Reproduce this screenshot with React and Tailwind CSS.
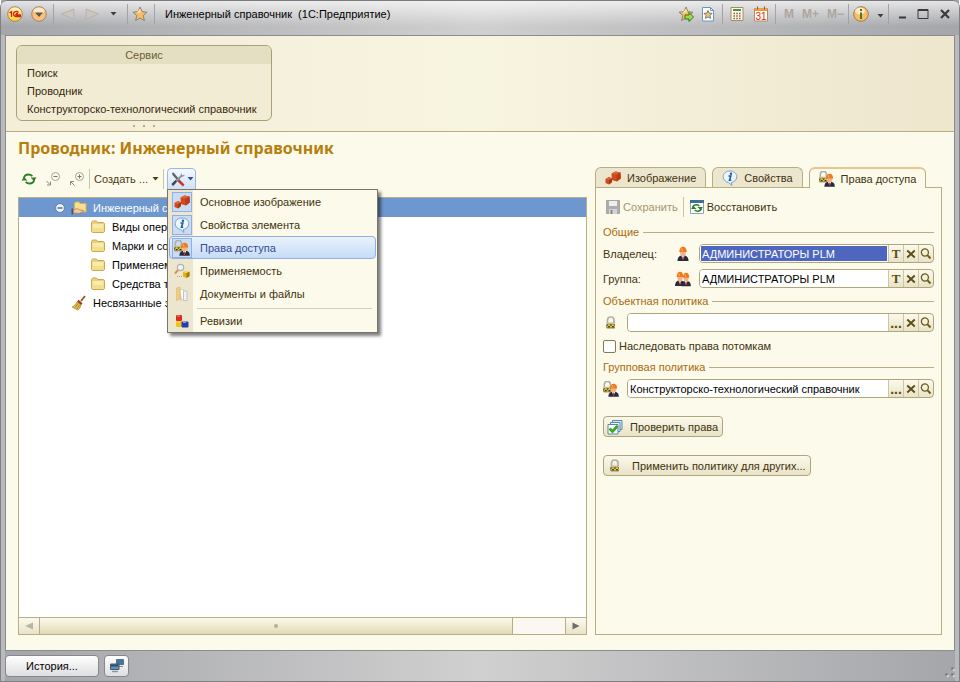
import { useState } from 'react'
import clsx from 'clsx'

function Icon({ size = 16, children, className }) {
  return (
    <svg
      width={size}
      height={size}
      viewBox="0 0 16 16"
      fill="none"
      aria-hidden="true"
      className={clsx('shrink-0', className)}
    >
      {children}
    </svg>
  )
}

function CubesIcon() {
  return (
    <Icon>
      <path d="M6.5 3.500l4-2 5 1 .3 6-4 3-5-1.500z" fill="#cf4a1f" />
      <path d="M6.500 3.500l4-2 5 1-4 2z" fill="#de6536" />
      <path d="M11.500 4.500l4-2 .3 6-4 3z" fill="#b83c14" />
      <path d="M.5 9L4 7l3 1.500V12l-3 2.500-3.500-1.500z" fill="#cf4a1f" />
      <path d="M.5 9L4 7l3 1.500-3 1.500z" fill="#de6536" />
      <path d="M4 10l3-1.500V12l-3 2.500z" fill="#a83510" />
    </Icon>
  )
}

function InfoBubbleIcon() {
  return (
    <Icon>
      <path
        d="M8 1c3.900 0 6.800 2.500 6.800 5.700S12.300 12 9.300 12.500L10 15.500 6.500 12.500C3.500 12 1.200 9.700 1.200 6.700 1.200 3.500 4.100 1 8 1z"
        fill="#eef6fd"
        stroke="#7ca0c4"
      />
      <circle cx="9" cy="3.700" r="1.200" fill="#1d5cab" />
      <path d="M6.500 6h2.300L7.500 10.200h1.700" stroke="#1d5cab" strokeWidth="1.600" />
    </Icon>
  )
}

function PadlockShape() {
  return (
    <>
      <path d="M4.500 8V5.200C4.500 3 5.800 2 7.800 2S11 3 11 5.200V8" stroke="#b0b0aa" strokeWidth="1.700" />
      <rect x="3.500" y="7.500" width="8.500" height="6.500" rx="1" fill="#c4bc92" />
      <path d="M3.500 9.500h8.500v3H3.500z" fill="#26241c" />
      <path d="M4 12l2-2.300 2 2.300 2-2.300 2 2.300" stroke="#e8c52e" strokeWidth="1.200" />
    </>
  )
}

function PadlockIcon() {
  return (
    <Icon>
      <PadlockShape />
    </Icon>
  )
}

function WorkerShape() {
  return (
    <>
      <path d="M2.500 15c0-3.500 1.500-5.500 5.500-5.500s5.500 2 5.500 5.500z" fill="#272c3d" />
      <path d="M6.200 9.500L8 13.500l1.800-4z" fill="#fff" />
      <path d="M7.600 10.300h.9l.4 2.700-.9 1-.8-1z" fill="#c8352b" />
      <ellipse cx="8" cy="6.500" rx="2.900" ry="3.500" fill="#f0b48a" />
      <path d="M4.300 6C4.300 2.800 5.700.8 8 .8s3.700 2 3.700 5.200z" fill="#ee7a1c" />
      <path d="M6.500 2.500L7.500 5" stroke="#ffb870" />
    </>
  )
}

function WorkerIcon() {
  return (
    <Icon>
      <WorkerShape />
    </Icon>
  )
}

function WorkersIcon() {
  return (
    <Icon>
      <g transform="translate(-2.200 0) scale(.9 1)">
        <WorkerShape />
      </g>
      <g transform="translate(4.200 1) scale(.86 .95)">
        <WorkerShape />
      </g>
    </Icon>
  )
}

function RightsIcon() {
  return (
    <Icon>
      <g transform="translate(-3 -1.500) scale(.95)">
        <PadlockShape />
      </g>
      <g transform="translate(3 2) scale(.95 .92)">
        <WorkerShape />
      </g>
    </Icon>
  )
}

function SearchBoxIcon() {
  return (
    <Icon>
      <circle cx="6.500" cy="4.500" r="3.200" fill="#edf5fb" stroke="#b3b3ad" strokeWidth="1.200" />
      <path d="M4 7L1 10.500" stroke="#d8954e" strokeWidth="2" />
      <path d="M3 13.500h5" stroke="#b4a679" strokeDasharray="1 1" />
      <path d="M9 9l3-1.200 3.500 1v4.500l-3 1.700L9 13.500z" fill="#dfb31b" />
      <path d="M9 9l3-1.200 3.500 1-3 1.200z" fill="#f7df71" />
      <path d="M12.500 10l3-1.200v4.500l-3 1.700z" fill="#a67b0b" />
    </Icon>
  )
}

function FilesIcon() {
  return (
    <Icon>
      <path d="M2.500 2L6 1v12l-3.500 1.500z" fill="#f1cf82" stroke="#d9b468" strokeWidth=".6" />
      <path d="M6 3.500h3.500v10.500H6z" fill="#fff" stroke="#c6c6c6" strokeWidth=".7" />
      <path d="M9.500 5H13v9.500H9.500z" fill="#f2f2f2" stroke="#b5b5b5" strokeWidth=".7" />
      <path d="M5.500 2.500l1.500 11.500" stroke="#e6c37a" strokeWidth="1.500" />
    </Icon>
  )
}

function RevisionsIcon() {
  return (
    <Icon>
      <rect x="2" y="2" width="6" height="6" rx="1" fill="#dd2b24" />
      <rect x="2" y="8" width="6" height="6" rx="1" fill="#f0c417" />
      <rect x="7.500" y="8.500" width="7" height="6" rx="1" fill="#2340b0" />
      <path d="M3 3h3M3 9h3M9 9.500h3" stroke="#fff" strokeOpacity=".5" />
    </Icon>
  )
}

function FolderIcon() {
  return (
    <Icon>
      <path d="M1.500 3.500l1-1.500h4l1 1.500h6l1 1V12.500l-1 1h-11l-1-1z" fill="#ecd07b" stroke="#cda94c" />
      <path d="M2.500 5h11v7.500h-11z" fill="#f9eba9" />
      <path d="M2.500 9h11v3.500h-11z" fill="#f4de8d" />
    </Icon>
  )
}

function SharedFolderIcon() {
  return (
    <Icon>
      <path d="M3.500 3.500l1-1.500h3.500l1 1.500h6V12h-11.500z" fill="#f7df91" stroke="#d9b351" />
      <path d="M2.500 10.500c2-1.500 3.500-2.500 5-1.500l1 1 3.500.3c1 .3 1 1.300 0 1.500l-4 1.700-5.500-.5z" fill="#efc9a2" stroke="#a9744a" strokeWidth=".7" />
      <path d="M.500 8.500h1.500v6H.5z" fill="#47536d" />
    </Icon>
  )
}

function BroomIcon() {
  return (
    <Icon>
      <path d="M10 6L14 1" stroke="#8d5a20" strokeWidth="1.800" />
      <path d="M7.500 4.800l4 3.500-1.500 2-4-3.500z" fill="#9d3b20" />
      <path d="M6 6.800l4 3.500c-.5 2-1.500 4-3.500 4.700L1 12c2.500-1 4-3 5-5.200z" fill="#e3bd4c" stroke="#a67b21" strokeWidth=".6" />
      <path d="M7 8.500L4 12.500M8.500 10l-2.500 4" stroke="#a67b21" strokeWidth=".8" />
    </Icon>
  )
}

function RefreshIcon() {
  return (
    <Icon>
      <path d="M2.800 7.500C3.200 4.800 5.200 3.500 7.500 3.500c1.500 0 2.800.6 3.800 1.700M13.200 8.500c-.4 2.700-2.400 4-4.700 4-1.500 0-2.800-.6-3.800-1.700" stroke="#2c7e22" strokeWidth="1.800" />
      <path d="M9.500 6.500h6L13 10zM.500 9.500h6L3 6z" fill="#2c7e22" />
    </Icon>
  )
}

function CollapseIcon({ plus }) {
  return (
    <Icon>
      <circle cx="10.500" cy="5.500" r="4" stroke="#a6a496" />
      <path d="M8.500 5.500h4" stroke="#77756a" />
      {plus && <path d="M10.500 3.500v4" stroke="#77756a" />}
      {plus ? (
        <path d="M5.500 14.500L2 11M1.500 14v-3.500H5" stroke="#8b897d" />
      ) : (
        <path d="M1.500 10L5 13.500M5.500 10.500V14H2" stroke="#8b897d" />
      )}
    </Icon>
  )
}

function ToolsIcon() {
  return (
    <Icon>
      <path d="M2 2l1.500-.5L13 12.500l-1.500 1.500L2.500 4z" fill="#5d646d" />
      <path d="M8.500 8l6 5.500-1.500 2L7 10z" fill="#c9352c" />
      <path d="M12 2l-2 3L3.500 11l-2 2 1.500 2 2-2 6-6.500L15 4.500l-1.500-.5-1 .5-.5-1z" fill="#8b9298" />
      <path d="M5.500 9L1.500 13l1.500 2 4-4.500z" fill="#3e4650" />
    </Icon>
  )
}

function SaveIcon() {
  return (
    <Icon>
      <path d="M1.500 1.500h13v13h-13z" fill="#adadad" stroke="#a5a5a5" />
      <path d="M4 2h8v5H4z" fill="#eee" />
      <path d="M4 10h8v5H4z" fill="#d5d5d5" />
      <path d="M5.500 11h2v4h-2z" fill="#888" />
    </Icon>
  )
}

function RestoreIcon() {
  return (
    <Icon>
      <path d="M1.500 1.500h13v13h-13z" fill="#fff" stroke="#8ea3b8" />
      <path d="M1 1h14v3H1z" fill="#3d6f96" />
      <path d="M3.500 8.500C4.300 6.500 6 5.800 7.500 5.800c1.200 0 2 .4 2.800 1M12.500 9.500c-.8 2-2.500 2.700-4 2.700-1.200 0-2-.4-2.800-1" stroke="#2c7e22" strokeWidth="1.600" />
      <path d="M8.500 8h5.500l-2.500 3zM2 10h5.500L4.500 7z" fill="#2c7e22" />
    </Icon>
  )
}

function CheckStackIcon() {
  return (
    <Icon>
      <path d="M5.500 1.500h9.500v9h-9.500z" fill="#dceaf4" stroke="#5688ab" />
      <path d="M3.500 3.500h9.500v9H3.500z" fill="#eaf3f9" stroke="#5688ab" />
      <path d="M1 5.500h10v9.500H1z" fill="#fff" stroke="#5688ab" />
      <path d="M2.500 9.500L5.500 12.500l5-5.500" stroke="#3aa822" strokeWidth="2.800" />
    </Icon>
  )
}

function StarIcon({ children }) {
  return (
    <Icon>
      <path d="M8 1l2 4.700 5 .5-3.800 3.400 1.200 5L8 12l-4.400 2.600 1.200-5L1 6.200l5-.5z" fill="#f8bd62" stroke="#8a8478" strokeLinejoin="round" />
      <path d="M8 2.500l1.300 3.700-4.800 1z" fill="#fde3ae" />
      {children}
    </Icon>
  )
}

function StarPageIcon() {
  return (
    <Icon>
      <path d="M2.500 1.500h8l3 3v10.500h-11z" fill="#fff" stroke="#6e96b4" />
      <path d="M10.500 1.500v3h3" stroke="#6e96b4" />
      <path d="M8 4.500l1.200 2.600 2.800.3-2 2 .5 3L8 11l-2.500 1.400.5-3-2-2 2.800-.3z" fill="#f5c56b" stroke="#4f6276" strokeWidth=".8" />
    </Icon>
  )
}

function CalculatorIcon() {
  return (
    <Icon>
      <path d="M2 1.500h12v13H2z" fill="#fff8ea" stroke="#a98a66" />
      <path d="M4 3h8v2H4z" fill="#459547" />
      <path d="M4.500 7.500h7M4.500 10h7M4.500 12.500h7" stroke="#77502c" strokeWidth="1.400" strokeDasharray="1.400 1.400" />
    </Icon>
  )
}

function CalendarIcon() {
  return (
    <Icon>
      <path d="M1.500 2.500h13v12.500h-13z" fill="#fffaf2" stroke="#b58c5e" />
      <path d="M2 2h12v3H2z" fill="#f19b47" />
      <path d="M4.500.500v3M11.500.500v3" stroke="#7d5b3a" />
      <text x="8" y="13.500" textAnchor="middle" fontSize="10" fill="#da2d20">31</text>
    </Icon>
  )
}

function InfoCircleIcon() {
  return (
    <Icon>
      <circle cx="8" cy="8" r="7.300" fill="#f9bd68" stroke="#a57a43" />
      <ellipse cx="7" cy="5" rx="5" ry="3.500" fill="#fff" fillOpacity=".65" />
      <path d="M8 3v2M8 6.500V13" stroke="#3e7b2c" strokeWidth="2" />
    </Icon>
  )
}

function LogoIcon() {
  return (
    <Icon>
      <defs>
        <linearGradient id="logo" x1="0" y1="0" x2="0" y2="1">
          <stop offset="0" stopColor="#fff9c6" />
          <stop offset="1" stopColor="#ffd91c" />
        </linearGradient>
      </defs>
      <circle cx="8" cy="8" r="7.300" fill="url(#logo)" stroke="#b6795c" />
      <path d="M2.500 7L4.500 5.500V11M11.500 6.500C10.500 5 6.500 5 6.500 8c0 2 1.500 2.500 3 2.500h4.500M11 7.800C9.500 7 8.500 8 9 9h5" stroke="#d3201c" strokeWidth="1.300" />
    </Icon>
  )
}

function MenuCircleIcon() {
  return (
    <Icon>
      <circle cx="8" cy="8" r="7.300" fill="#f8c27e" stroke="#a58366" />
      <ellipse cx="8" cy="4.500" rx="5.500" ry="3" fill="#fff" fillOpacity=".6" />
      <path d="M4 6.500h8L8 11z" fill="#65564a" />
    </Icon>
  )
}

function MagnifierIcon() {
  return (
    <Icon size={12}>
      <circle cx="6.500" cy="6" r="4.700" stroke="#705b18" strokeWidth="1.700" />
      <path d="M9.800 9.500L14 14" stroke="#705b18" strokeWidth="2.600" />
    </Icon>
  )
}

function CrossIcon() {
  return (
    <Icon size={10}>
      <path d="M2 2.500l12 11M14 2.500L2 13.500" stroke="#5f4c10" strokeWidth="3" />
    </Icon>
  )
}

function WindowsIcon() {
  return (
    <Icon>
      <path d="M7.500 1.500h7v5h-7z" fill="#3f77a0" stroke="#5e6f7c" />
      <path d="M10 8.500h4" stroke="#7f8a92" />
      <path d="M1.500 6h8.500v5.500H1.500z" fill="#5b95bd" stroke="#4b5a66" />
      <path d="M2 6.500h7.500v2H2z" fill="#2b506e" />
      <path d="M3 13.500h6" stroke="#8d979e" strokeWidth="1.500" />
    </Icon>
  )
}

function Caret({ className }) {
  return (
    <svg width="7" height="4" viewBox="0 0 7 4" aria-hidden="true" className={clsx('shrink-0', className)}>
      <path d="M.5 0h6L3.500 3.500z" fill="currentColor" />
    </svg>
  )
}

function Divider() {
  return <span className="h-5 w-px bg-[#a3a3a6]" />
}

function TitleBar() {
  return (
    <header className="flex h-[35px] items-start bg-linear-to-r from-[#a5a6aa] via-[#d0d0d0] to-[#a5a6aa]">
      <div className="flex h-[26px] w-full items-center rounded-t-md border-t border-[#7b7b7f] bg-linear-to-b from-white/70 via-white/35 to-transparent px-1.5 text-[#3d3d40]">
        <button aria-label="1С"><LogoIcon /></button>
        <button aria-label="Главное меню" className="ml-2"><MenuCircleIcon /></button>
        <div className="ml-1.5 flex items-center gap-1.5">
          <Divider />
          <button aria-label="Назад">
            <Icon><path d="M14 3v10L1.500 8z" fill="#cac5bd" stroke="#bab4ab" /></Icon>
          </button>
          <button aria-label="Вперёд" className="ml-0.5">
            <Icon><path d="M2 3v10L14.500 8z" fill="#cac5bd" stroke="#bab4ab" /></Icon>
          </button>
          <button aria-label="Журнал переходов" className="mx-1"><Caret /></button>
          <Divider />
        </div>
        <button aria-label="Избранное" className="mr-1.5 ml-1"><StarIcon /></button>
        <Divider />
        <h1 className="ml-2.5 grow whitespace-pre text-[11px] text-black">
          Инженерный справочник  (1С:Предприятие)
        </h1>
        <div className="flex items-center gap-1.5">
          <button aria-label="Добавить в избранное">
            <StarIcon><path d="M7 9h4V6.500L15.500 11 11 15.500V13H7z" fill="#9bd957" stroke="#34791f" /></StarIcon>
          </button>
          <button aria-label="Ссылка"><StarPageIcon /></button>
          <Divider />
          <button aria-label="Калькулятор"><CalculatorIcon /></button>
          <button aria-label="Календарь" className="ml-0.5"><CalendarIcon /></button>
          <Divider />
        </div>
        <div className="ml-2 flex gap-2 text-xs font-bold text-[#ada5a0]">
          <button>M</button>
          <button>M+</button>
          <button>M−</button>
        </div>
        <div className="ml-1 flex items-center gap-1">
          <Divider />
          <button aria-label="Справка"><InfoCircleIcon /></button>
          <button aria-label="Ещё" className="ml-1 pt-1"><Caret /></button>
          <Divider />
        </div>
        <div className="ml-1.5 flex gap-1">
          <button aria-label="Свернуть"><Icon><path d="M4 11.500h7" stroke="#39393c" strokeWidth="2" /></Icon></button>
          <button aria-label="Развернуть"><Icon><path d="M3 3.500h10v9H3z" stroke="#39393c" /><path d="M3 4h10" stroke="#39393c" strokeWidth="2" /></Icon></button>
          <button aria-label="Закрыть" className="ml-0.5"><Icon><path d="M4 4l8 8M12 4l-8 8" stroke="#39393c" strokeWidth="2.200" /></Icon></button>
        </div>
      </div>
    </header>
  )
}

const services = ['Поиск', 'Проводник', 'Конструкторско-технологический справочник']

function ServicePanel() {
  return (
    <div className="border-b border-[#b8ae84] bg-linear-to-r from-[#f4edd8] via-[#f7f4e0] to-[#eee6cd] px-2.5 pt-[9px]">
      <nav className="w-64 overflow-hidden rounded-md border border-[#aaa078] bg-[#f3ecd4]">
        <h2 className="bg-[#e4dfc3] text-center leading-[18px] text-[#6b6030]">Сервис</h2>
        <ul className="px-2.5 pb-0.5">
          {services.map((name) => (
            <li key={name} className="leading-[18px]">
              <a href="#" className="whitespace-nowrap text-[#35290c]">{name}</a>
            </li>
          ))}
        </ul>
      </nav>
      <div className="flex h-2.5 w-64 items-center justify-center gap-2">
        <span className="size-0.5 bg-[#b5ac88]" />
        <span className="size-0.5 bg-[#b5ac88]" />
        <span className="size-0.5 bg-[#b5ac88]" />
      </div>
    </div>
  )
}

const menuItems = [
  { label: 'Основное изображение', icon: CubesIcon, checked: true },
  { label: 'Свойства элемента', icon: InfoBubbleIcon, checked: true },
  { label: 'Права доступа', icon: RightsIcon, checked: true, active: true },
  { label: 'Применяемость', icon: SearchBoxIcon },
  { label: 'Документы и файлы', icon: FilesIcon },
  { label: 'Ревизии', icon: RevisionsIcon, separated: true },
]

function ToolsMenu() {
  return (
    <ul className="absolute top-[21px] left-0 z-10 w-[211px] border border-[#77766d] bg-linear-to-r from-[#ece6cf] from-[25px] to-[#fcfaeb] to-[25px] px-px shadow-[3px_3px_3px_rgba(0,0,0,0.5)]">
      {menuItems.map(({ label, icon: ItemIcon, checked, active, separated }) => (
        <li key={label} className={clsx(separated && 'pt-[3px]')}>
          {separated && <hr className="mr-1 ml-7 border-[#d3cfb8]" />}
          <button
            className={clsx(
              'flex h-[23px] w-full items-center gap-2 rounded-sm border px-0.5 text-left',
              active
                ? 'border-[#91aee6] bg-linear-to-b from-[#e9f2fc] to-[#c6dcf6] text-[#374a94]'
                : 'border-transparent text-[#42330e]'
            )}
          >
            <span
              className={clsx(
                'flex size-5 items-center justify-center border',
                checked ? 'border-[#91aee6] bg-[#c9dcf4]' : 'border-transparent'
              )}
            >
              <ItemIcon />
            </span>
            {label}
          </button>
        </li>
      ))}
    </ul>
  )
}

function Toolbar() {
  return (
    <div className="flex h-[22px] items-center">
      <button aria-label="Обновить" className="ml-[3px]"><RefreshIcon /></button>
      <button aria-label="Свернуть все" className="ml-2"><CollapseIcon /></button>
      <button aria-label="Развернуть все" className="ml-2"><CollapseIcon plus /></button>
      <span className="ml-1 h-5 w-px bg-[#cbc5a6]" />
      <button className="ml-1 flex items-center gap-1 whitespace-nowrap text-[#4c3b12]">
        Создать ...
        <Caret />
      </button>
      <span className="ml-1 h-5 w-px bg-[#cbc5a6]" />
      <div className="relative ml-[3px]">
        <button
          aria-label="Настройка"
          aria-expanded="true"
          className="flex h-[22px] w-[29px] items-center justify-center gap-px rounded-t-sm border border-[#9cb6e8] bg-linear-to-b from-[#f4f9fe] to-[#cfe0f7] text-[#384f8d]"
        >
          <ToolsIcon />
          <Caret />
        </button>
        <ToolsMenu />
      </div>
    </div>
  )
}

const folders = ['Виды операций', 'Марки и сорта', 'Применяемость', 'Средства труда']

function Tree() {
  return (
    <ul className="grow overflow-hidden whitespace-nowrap text-black">
      <li>
        <div className="flex h-[19px] items-center bg-[#6f97cf] pl-9 text-white">
          <Icon size={10} className="mr-1.5">
            <circle cx="8" cy="8" r="7" fill="#eef2f9" stroke="#4c6792" />
            <path d="M4 8h8" stroke="#3c5078" strokeWidth="2" />
          </Icon>
          <SharedFolderIcon />
          <span className="ml-1.5">Инженерный справочник</span>
        </div>
        <ul>
          {folders.map((name) => (
            <li key={name} className="flex h-[19px] items-center gap-1.5 pl-[71px]">
              <FolderIcon />
              {name}
            </li>
          ))}
        </ul>
      </li>
      <li className="flex h-[19px] items-center gap-1.5 pl-[52px]">
        <BroomIcon />
        Несвязанные элементы
      </li>
    </ul>
  )
}

function ScrollBar() {
  return (
    <div className="flex h-[17px] border-t border-[#b8ae84] bg-[#faf8f1]">
      <button aria-label="Влево" className="flex w-[21px] items-center justify-center border-r border-[#b8ae84] bg-linear-to-b from-[#fcfaf0] to-[#e8e3c8]">
        <Icon size={8}><path d="M16 1v14L0 8z" fill="#b9b5a4" /></Icon>
      </button>
      <div className="flex grow">
        <div className="flex w-9/10 items-center justify-center border-r border-[#b8ae84] bg-linear-to-b from-[#fbf9ec] via-[#efebd0] to-[#e0dab8]">
          <span className="size-1 rounded-full bg-[#b9b08c]" />
        </div>
      </div>
      <button aria-label="Вправо" className="flex w-[21px] items-center justify-center border-l border-[#b8ae84] bg-linear-to-b from-[#fcfaf0] to-[#e8e3c8]">
        <Icon size={8}><path d="M1 1v14l14-7z" fill="#6f6d66" /></Icon>
      </button>
    </div>
  )
}

const tabs = [
  { label: 'Изображение', icon: CubesIcon },
  { label: 'Свойства', icon: InfoBubbleIcon },
  { label: 'Права доступа', icon: RightsIcon, active: true },
]

function TabBar() {
  return (
    <div role="tablist" className="flex h-[27px] items-end gap-1.5 text-[#42330e]">
      {tabs.map(({ label, icon: TabIcon, active }) => (
        <button
          key={label}
          role="tab"
          aria-selected={Boolean(active)}
          className={clsx(
            'flex items-center gap-1.5 rounded-t-md border border-[#b8ae84] px-[9px] whitespace-nowrap',
            active
              ? 'relative -mb-px h-[21px] border-t-2 border-t-[#e6c68a] border-b-0 bg-[#fcfaeb]'
              : 'h-5 border-b-0 bg-[#ece6cf]'
          )}
        >
          <TabIcon />
          {label}
        </button>
      ))}
    </div>
  )
}

function Group({ title }) {
  return (
    <h3 className="mt-[5px] flex h-4 items-center gap-1 text-[#ab690a]">
      {title}
      <span className="h-px grow bg-[#b8ae84]" />
    </h3>
  )
}

function Field({ id, label, value, picker = '...', selected }) {
  const cell = 'flex w-[15px] items-center justify-center border-l border-[#cdc6a3]'
  return (
    <div className="flex h-[19px] min-w-0 grow overflow-hidden rounded-sm border border-[#b0a67b] bg-linear-to-b from-[#fbf9ec] to-[#e8e3c8] text-[#5f4c10]">
      <div className={clsx('min-w-0 grow bg-white', selected && 'p-px')}>
        <input
          id={id}
          aria-label={label}
          defaultValue={value}
          className={clsx(
            'block h-full w-full outline-none',
            selected ? 'bg-[#4f66bf] px-px text-white' : 'px-0.5 text-black'
          )}
        />
      </div>
      <button
        aria-label="Выбрать"
        className={clsx(cell, picker === 'T' ? 'font-[Liberation_Serif,serif] text-[13px] font-bold' : 'text-sm font-bold')}
      >
        {picker}
      </button>
      <button aria-label="Очистить" className={cell}><CrossIcon /></button>
      <button aria-label="Открыть" className={cell}><MagnifierIcon /></button>
    </div>
  )
}

function RightsPanel() {
  const [inherit, setInherit] = useState(false)

  return (
    <section className="flex w-[347px] shrink-0 flex-col">
      <TabBar />
      <div className="grow border border-[#b8ae84] px-[7px] pt-[7px] text-[#42330e]">
        <div className="flex h-6 items-center">
          <button disabled className="ml-0.5 flex items-center gap-0.5 text-[#a5956c]">
            <SaveIcon />
            Сохранить
          </button>
          <span className="mx-[5px] h-5 w-px bg-[#cbc5a6]" />
          <button className="flex items-center gap-0.5">
            <RestoreIcon />
            Восстановить
          </button>
        </div>

        <Group title="Общие" />
        <div className="mt-1 flex items-center">
          <label htmlFor="owner" className="w-[72px]">Владелец:</label>
          <WorkerIcon />
          <span className="w-2" />
          <Field id="owner" value="АДМИНИСТРАТОРЫ PLM" picker="T" selected />
        </div>
        <div className="mt-1.5 flex items-center">
          <label htmlFor="group" className="w-[72px]">Группа:</label>
          <WorkersIcon />
          <span className="w-2" />
          <Field id="group" value="АДМИНИСТРАТОРЫ PLM" picker="T" />
        </div>

        <Group title="Объектная политика" />
        <div className="mt-1 flex items-center gap-2">
          <PadlockIcon />
          <Field label="Объектная политика" />
        </div>
        <label className="mt-1.5 flex h-4 items-center gap-[3px]">
          <input
            type="checkbox"
            checked={inherit}
            onChange={(e) => setInherit(e.target.checked)}
            className="size-[13px] appearance-none rounded-xs border border-[#857b51] bg-white checked:bg-[#857b51]"
          />
          Наследовать права потомкам
        </label>

        <Group title="Групповая политика" />
        <div className="mt-1 flex items-center gap-2">
          <RightsIcon />
          <Field label="Групповая политика" value="Конструкторско-технологический справочник" />
        </div>

        <button className="mt-[18px] flex h-[21px] items-center gap-[7px] rounded-sm border border-[#b0a67b] bg-linear-to-b from-[#fbf9ec] to-[#e8e3c8] pr-1 pl-[3px]">
          <CheckStackIcon />
          Проверить права
        </button>
        <button className="mt-[18px] flex h-[21px] items-center gap-[9px] rounded-sm border border-[#b0a67b] bg-linear-to-b from-[#fbf9ec] to-[#e8e3c8] pr-1 pl-[3px]">
          <PadlockIcon />
          Применить политику для других...
        </button>
      </div>
    </section>
  )
}

function StatusBar() {
  return (
    <footer className="flex h-[30px] items-center gap-[5px] bg-linear-to-r from-[#a5a6aa] via-[#d0d0d0] to-[#a5a6aa]">
      <button className="h-[22px] w-[94px] rounded-sm border border-[#87888b] bg-linear-to-b from-white to-[#dedee0] text-black">
        История...
      </button>
      <button aria-label="Окна" className="flex h-[22px] w-[25px] items-center justify-center rounded-sm border border-[#87888b] bg-linear-to-b from-white to-[#dedee0]">
        <WindowsIcon />
      </button>
      <Icon size={12} className="mt-3 ml-auto">
        <path d="M11 2h3v3h-3zM11 10h3v3h-3zM3 10h3v3H3z" fill="#747579" />
        <path d="M13 4h3v3h-3zM13 12h3v3h-3zM5 12h3v3H5z" fill="#ccc" />
      </Icon>
    </footer>
  )
}

export default function App() {
  return (
    <div className="flex min-h-screen flex-col rounded-t-lg border-x border-b border-[#808083] bg-[#b9babd] font-['Liberation_Sans',Arial,sans-serif] text-[11px] leading-4">
      <TitleBar />
      <div className="flex grow flex-col px-1">
        <main className="flex grow flex-col border border-[#8b8b90] bg-[#fcfaeb]">
          <ServicePanel />
          <div className="flex grow flex-col px-3 pt-1 pb-[15px]">
            <h2 className="font-['Noto_Sans',sans-serif] text-base leading-6 font-bold text-[#b67e0b]">
              Проводник: Инженерный справочник
            </h2>
            <div className="flex grow gap-2">
              <section className="flex min-w-0 grow flex-col pt-2">
                <Toolbar />
                <div className="mt-[7px] flex grow flex-col border border-[#b8ae84] bg-white">
                  <Tree />
                  <ScrollBar />
                </div>
              </section>
              <RightsPanel />
            </div>
          </div>
        </main>
        <StatusBar />
      </div>
    </div>
  )
}
